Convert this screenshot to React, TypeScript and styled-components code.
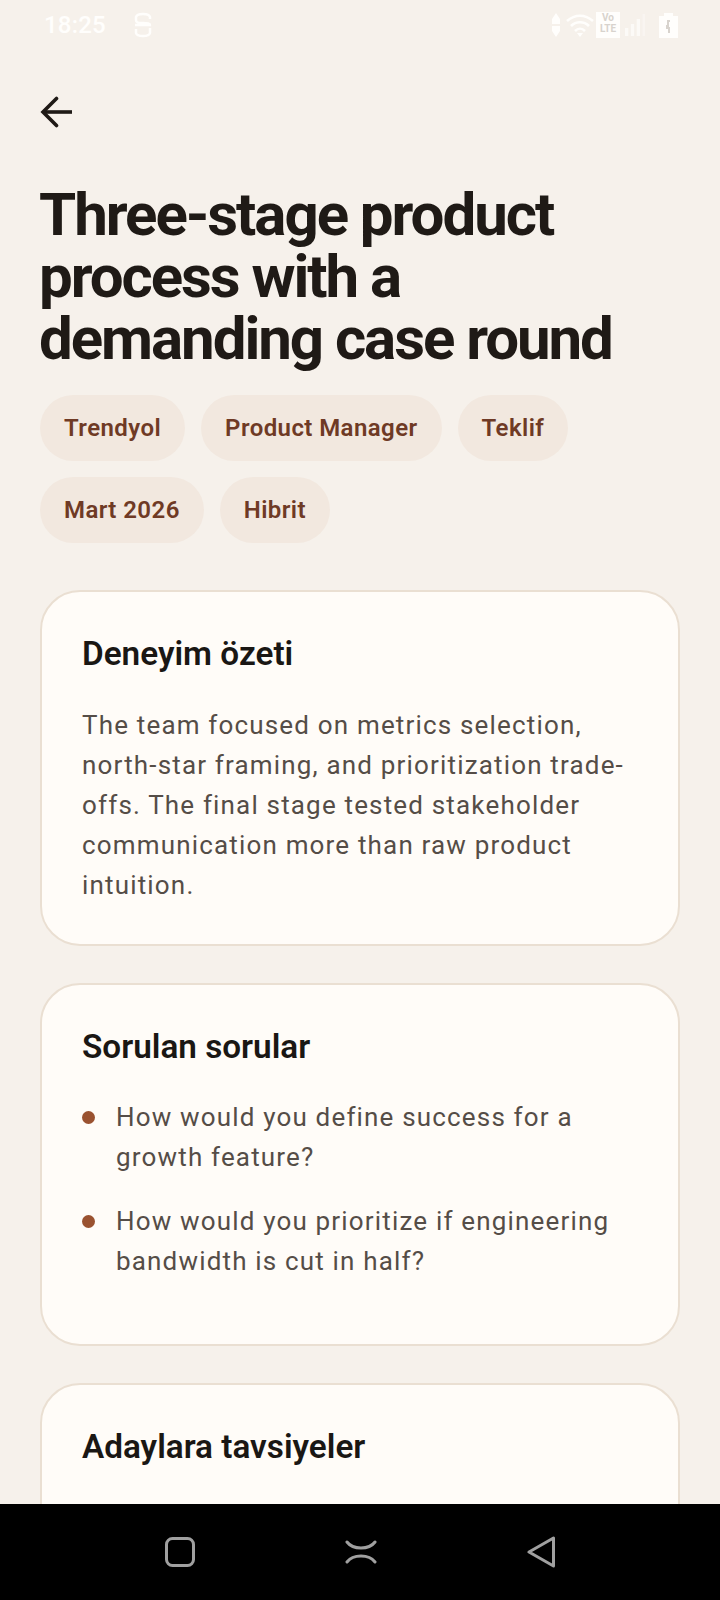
import React from "react";
import styled, { createGlobalStyle } from "styled-components";

const GlobalStyle = createGlobalStyle`
  html, body {
    margin: 0;
    padding: 0;
    background: #f6f1eb;
    font-family: Roboto, "Noto Sans", sans-serif;
  }
`;

const Screen = styled.div`
  width: 720px;
  height: 1600px;
  display: flex;
  flex-direction: column;
  overflow: hidden;
  background: #f6f1eb;
`;

const StatusBar = styled.div`
  height: 50px;
  flex: none;
  padding: 0 42px 0 44px;
  display: flex;
  align-items: center;
  justify-content: space-between;
  color: #fffefc;
`;

const StatusGroup = styled.div`
  display: flex;
  align-items: center;
  gap: 27px;
`;

const StatusIcons = styled.div`
  display: flex;
  align-items: center;
`;

const StatusGlyph = styled.svg<{ $gap?: number }>`
  display: block;
  margin-left: ${(props) => props.$gap ?? 0}px;
`;

const Clock = styled.span`
  font-size: 24px;
  font-weight: 500;
  letter-spacing: 0.2px;
`;

const VolteBox = styled.span`
  width: 24px;
  height: 26px;
  margin-left: 1px;
  background: #fffefc;
  color: #d8d3cd;
  font-size: 10px;
  line-height: 11px;
  font-weight: 700;
  text-align: center;
  display: block;
`;

const Content = styled.main`
  flex: 1;
  min-height: 0;
  overflow: hidden;
  padding: 40px 40px 0;
`;

const BackButton = styled.div`
  height: 44px;
  display: flex;
  align-items: center;
  color: #1f1a16;
`;

const Title = styled.h1`
  margin: 50px 0 0 -1px;
  font-size: 60px;
  line-height: 62px;
  font-weight: 700;
  letter-spacing: -2.05px;
  color: #1f1a16;
`;

const Chips = styled.div`
  display: flex;
  flex-wrap: wrap;
  gap: 16px;
  margin-top: 25px;
`;

const Chip = styled.span`
  height: 66px;
  padding: 0 24px;
  border-radius: 33px;
  background: #f2e8df;
  color: #6f3a25;
  font-size: 24px;
  font-weight: 600;
  letter-spacing: 0.42px;
  display: flex;
  align-items: center;
`;

const Cards = styled.div`
  display: flex;
  flex-direction: column;
  gap: 37px;
  margin-top: 47px;
`;

const Card = styled.section<{ $clipped?: boolean }>`
  flex: none;
  padding: 40px 40px 39px;
  border: 2px solid #eadfd2;
  border-radius: 40px;
  background: #fffcf8;
  min-height: ${(props) => (props.$clipped ? "300px" : "0")};
`;

const CardTitle = styled.h2`
  margin: 0;
  font-size: 33.3px;
  line-height: 44px;
  font-weight: 600;
  color: #1a1714;
`;

const Body = styled.p`
  margin: 29px 0 0;
  font-size: 26px;
  line-height: 40px;
  letter-spacing: 1.17px;
  color: #554d47;
`;

const BulletList = styled.ul`
  list-style: none;
  margin: 28px 0 0;
  padding: 0 0 24px;
  display: flex;
  flex-direction: column;
  gap: 24px;
`;

const Bullet = styled.li`
  display: flex;
  gap: 21px;
  font-size: 26px;
  line-height: 40px;
  letter-spacing: 1.17px;
  color: #554d47;

  &::before {
    content: "";
    flex: none;
    width: 13px;
    height: 13px;
    margin-top: 14px;
    border-radius: 50%;
    background: #9a5230;
  }
`;

const NavBar = styled.nav`
  height: 96px;
  flex: none;
  background: #000;
  display: flex;
  align-items: center;
  justify-content: space-between;
  padding: 0 165px;
`;

const questions = [
  "How would you define success for a growth feature?",
  "How would you prioritize if engineering bandwidth is cut in half?",
];

const chips = ["Trendyol", "Product Manager", "Teklif", "Mart 2026", "Hibrit"];

export default function App() {
  return (
    <Screen>
      <GlobalStyle />
      <StatusBar>
        <StatusGroup>
          <Clock>18:25</Clock>
          <svg width="20" height="26" viewBox="0 0 20 26" fill="none" stroke="#fffefc" strokeWidth="2.5">
            <path d="M17 7V5c-1-4-13-4-14 0v3c0 3 2 3 7 3s7 0 7 3" />
            <path d="M2 13h16" />
            <path d="M3 17v4c1 4 13 4 14 0v-5" />
          </svg>
        </StatusGroup>
        <StatusIcons>
          <StatusGlyph width="10" height="24" viewBox="0 0 10 24" fill="#fffefc">
            <path d="M5 0l4 6v5H1V6zM5 24l-4-6v-5h8v5z" />
          </StatusGlyph>
          <StatusGlyph $gap={4} width="30" height="24" viewBox="0 0 30 24" fill="none" stroke="#fffefc" strokeWidth="2.5">
            <path d="M2 8c8-7 18-7 26 0M6 13c5-5 13-5 18 0M10 18c3-3 7-3 10 0" />
            <path d="M15 24l-3-4h6z" fill="#fffefc" stroke="none" />
          </StatusGlyph>
          <VolteBox>Vo LTE</VolteBox>
          <StatusGlyph $gap={5} width="20" height="22" viewBox="0 0 24 22" fill="#fffefc" opacity="0.75" preserveAspectRatio="none">
            <rect x="0" y="14" width="4" height="8" />
            <rect x="7" y="10" width="4" height="12" />
            <rect x="14" y="5" width="4" height="17" />
            <rect x="21" y="0" width="3" height="22" opacity="0.5" />
          </StatusGlyph>
          <StatusGlyph $gap={14} width="19" height="25" viewBox="0 0 19 25">
            <path d="M5 0h9v3h5v22H0V3h5z" fill="#fffefc" />
            <path d="M11 8H9v5H8v2h2v5" fill="none" stroke="#d8d3cd" strokeWidth="2" />
          </StatusGlyph>
        </StatusIcons>
      </StatusBar>

      <Content>
        <BackButton>
          <svg width="33" height="32" viewBox="0 0 33 32" fill="none" stroke="currentColor" strokeWidth="3.6" strokeLinecap="round">
            <path d="M32 16H3" strokeLinecap="butt" />
            <path d="M16.5 2.5L3 16l13.5 13.5" />
          </svg>
        </BackButton>
        <Title>
          Three-stage product
          <br />
          process with a
          <br />
          demanding case round
        </Title>
        <Chips>
          {chips.map((chip) => (
            <Chip key={chip}>{chip}</Chip>
          ))}
        </Chips>
        <Cards>
          <Card>
            <CardTitle>Deneyim özeti</CardTitle>
            <Body>
              The team focused on metrics selection, north-star framing, and prioritization
              trade-offs. The final stage tested stakeholder communication more than raw product
              intuition.
            </Body>
          </Card>
          <Card>
            <CardTitle>Sorulan sorular</CardTitle>
            <BulletList>
              {questions.map((q) => (
                <Bullet key={q}>{q}</Bullet>
              ))}
            </BulletList>
          </Card>
          <Card $clipped>
            <CardTitle>Adaylara tavsiyeler</CardTitle>
          </Card>
        </Cards>
      </Content>

      <NavBar>
        <svg width="30" height="30" viewBox="0 0 30 30" fill="none" stroke="#a0a0a0" strokeWidth="3">
          <rect x="1.5" y="1.5" width="27" height="27" rx="6" />
        </svg>
        <svg width="32" height="24" viewBox="0 0 32 24" fill="none" stroke="#a0a0a0" strokeWidth="3" strokeLinecap="round">
          <path d="M2 2c3 4 8 6 14 6s11-2 14-6" />
          <path d="M2 22c3-4 8-6 14-6s11 2 14 6" />
        </svg>
        <svg width="28" height="32" viewBox="0 0 28 32" fill="none" stroke="#a0a0a0" strokeWidth="3" strokeLinejoin="round">
          <path d="M26.5 2v28L2 16z" />
        </svg>
      </NavBar>
    </Screen>
  );
}
